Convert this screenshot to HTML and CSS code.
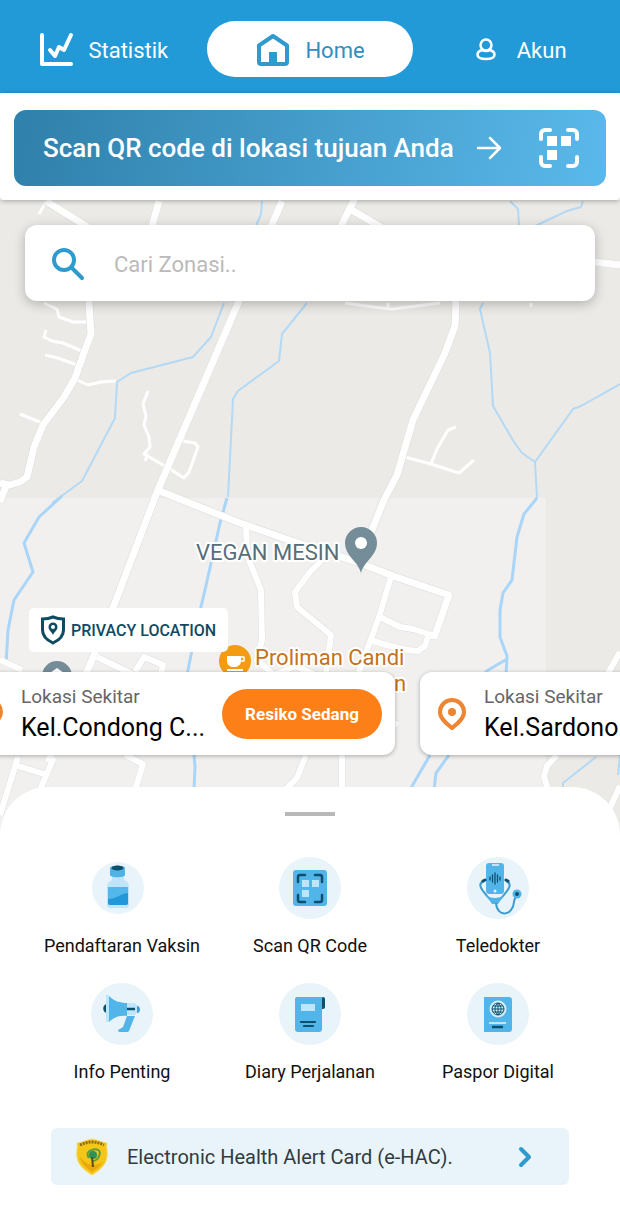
FILE: index.html
```html
<!DOCTYPE html>
<html lang="id">
<head>
    <meta charset="UTF-8">
    <meta name="viewport" content="width=device-width, initial-scale=1">
    <title>Home</title>
    <link rel="stylesheet" href="styles.css">
</head>
<body>
    <nav class="tabs">
        <a class="tab" href="#statistik">
            <svg width="36" height="36" viewBox="0 0 36 36" fill="none" stroke="#fff" stroke-width="4" stroke-linecap="round" stroke-linejoin="round">
                <path d="M4 3v29h29"/>
                <path d="M12 18l5 6 4-9 5 3 7-15"/>
            </svg>
            <span>Statistik</span>
        </a>
        <a class="tab active" href="#home">
            <svg width="36" height="36" viewBox="0 0 36 36" fill="none" stroke="#2f9ace" stroke-width="4" stroke-linejoin="round">
                <path d="M4 13.500L18 4l14 9.500V30a2 2 0 0 1-2 2H6a2 2 0 0 1-2-2z"/>
                <path d="M14 20h8v12h-8z" fill="#2f9ace" stroke="none"/>
            </svg>
            <span>Home</span>
        </a>
        <a class="tab tab-akun" href="#akun">
            <svg width="22" height="26" viewBox="0 0 22 26" fill="none" stroke="#fff" stroke-width="2.500">
                <circle cx="11" cy="8" r="5.500"/>
                <path d="M7 13c-3 1-4.500 2.500-4.500 4.500C2.500 20.500 6 22 11 22s8.500-1.500 8.500-4.500c0-2-1.500-3.500-4.500-4.500-2 1.300-6 1.300-8 0z"/>
            </svg>
            <span>Akun</span>
        </a>
    </nav>

    <div class="scan-bar">
        <button class="scan-button" type="button">
            <span>Scan QR code di lokasi tujuan Anda</span>
            <svg width="26" height="24" viewBox="0 0 26 24" fill="none" stroke="#fff" stroke-width="2.500" stroke-linecap="round" stroke-linejoin="round">
                <path d="M2 12h22M14 2l10 10-10 10"/>
            </svg>
            <svg class="scan-qr" width="40" height="40" viewBox="0 0 40 40" fill="none" stroke="#fff" stroke-width="4" stroke-linecap="round">
                <path d="M2 11V6a4 4 0 0 1 4-4h5M29 2h5a4 4 0 0 1 4 4v5M2 29v5a4 4 0 0 0 4 4h5M29 38h5a4 4 0 0 0 4-4v-5"/>
                <path d="M8 8h10v10H8zM22 8h10v10H22zM8 22h10v10H8z" fill="#fff" stroke="none"/>
            </svg>
        </button>
    </div>

    <main class="map">
        <svg class="map-canvas" viewBox="0 200 620 640" preserveAspectRatio="xMidYMin slice">
            <defs>
                <g id="roads-main">
                    <path d="M46 201L86 226L92 270L89 303L91 334L85 350L75 378L64 397L43 425L34 447L27 477L20 482L6 486L0 502"/>
                    <path d="M159 201L152 226M282 201L239 301L157 492L113 608L92 660L48 762"/>
                    <path d="M350 209L384 229L450 280L456 303L455 326L445 353L413 420L397 475L384 500L370 535"/>
                    <path d="M355 198L340 228M0 483L8 485M157 490L240 523L295 542L360 563L393 576L449 595L435 635"/>
                    <path d="M594 262L620 265"/>
                </g>
                <g id="roads-side">
                    <path d="M246 524L247 555L261 590L262 640L257 660L274 675L295 666L328 680"/>
                    <path d="M330 552L310 572L295 592L297 607L331 635L326 672"/>
                    <path d="M391 577L379 617L367 650L357 678M380 617L400 627L413 629L435 636L428 636L425 646L418 651L408 650L390 646L373 641"/>
                    <path d="M97 657L132 674M135 672L144 657L163 665L160 678M0 660L22 670"/>
                    <path d="M18 757L0 815M15 765L44 774M54 757L40 790M125 755L143 764L135 790"/>
                    <path d="M306 755L297 778L285 790M342 755V790M380 715L398 725"/>
                    <path d="M557 755L547 766L544 776L548 790M620 786L608 812M607 675L620 652"/>
                </g>
                <g id="roads-thin">
                    <path d="M46 202L39 214M44 303L57 309L59 317L73 322L88 322"/>
                    <path d="M46 330L44 337L52 341L63 343L82 351M45 355L58 358L77 365"/>
                    <path d="M75 379L88 385L101 382L116 381M20 414L42 423"/>
                    <path d="M148 391L143 404L146 416L144 425L149 437L150 447L144 454L170 469L184 478L189 472L198 447L195 443L183 441M148 454L145 461"/>
                    <path d="M345 303L374 307L392 309L440 303M388 303V307M531 303V307"/>
                    <path d="M405 457L431 464L459 473L474 460M431 464L437 449L448 430L456 427"/>
                </g>
            </defs>
            <rect y="200" width="620" height="640" fill="#ebeae6"/>
            <rect y="498" width="546" height="342" fill="#f1f0ef"/>
            <g class="river">
                <path d="M262 201L261 214L256 226M224 303L211 337L193 357L131 373L117 382L115 418L82 481L52 503"/>
                <path d="M307 303L282 334L279 361L238 391L233 399L228 497"/>
                <path d="M510 201L518 209L519 226M583 201L581 207L567 211L535 226M483 303L480 309L490 353L493 406L514 442L522 453L535 462L537 498M535 462L573 409L581 406L620 384"/>
                <path d="M596 757L563 783V790M620 755L618 775"/>
            </g>
            <g class="river river-wide">
                <path d="M62 496L39 517L24 543L33 572L14 600L8 630L6 665"/>
                <path d="M227 498L220 523L205 590L199 615L187 675M194 755L195 766L194 790"/>
                <path d="M537 498L524 514L517 537L512 580L503 593L500 610V637L507 656L506 675M507 659L485 672M430 755L411 788M449 755L436 773L434 790"/>
            </g>
            <use href="#roads-thin" stroke="#fff" stroke-width="3"/>
            <use href="#roads-side" stroke="#e0dfdd" stroke-width="7"/>
            <use href="#roads-main" stroke="#dcdbd8" stroke-width="8"/>
            <use href="#roads-side" stroke="#fff" stroke-width="6"/>
            <use href="#roads-main" stroke="#fff" stroke-width="7"/>
            <path d="M361 573c-3-12-16-17-16-30a16 16 0 0 1 32 0c0 13-13 18-16 30z" fill="#748d99"/>
            <circle cx="361" cy="543" r="6" fill="#fff"/>
            <circle cx="57" cy="676" r="15" fill="#748d99"/>
            <path d="M57 668l7 5H50z" fill="#fff"/>
            <circle cx="235" cy="661" r="16" fill="#f39c12"/>
            <path d="M227 656h14v5c0 8-14 8-14 0zM227 669h16v2h-16z" fill="#fff"/>
            <path d="M241 657h3v4h-4" fill="none" stroke="#fff" stroke-width="1.500"/>
            <text class="place" x="196" y="560">VEGAN MESIN</text>
            <text class="place place-food" x="255" y="665">Proliman Candi</text>
            <text class="place place-food" x="394" y="691">n</text>
        </svg>

        <div class="search">
            <label for="zonasi" aria-label="Cari Zonasi">
                <svg width="34" height="34" viewBox="0 0 34 34" fill="none" stroke="#2f9ace" stroke-width="4" stroke-linecap="round">
                    <circle cx="13" cy="13" r="10"/>
                    <path d="M20.500 20.500L31 31"/>
                </svg>
            </label>
            <input type="text" id="zonasi" placeholder="Cari Zonasi..">
        </div>

        <button class="privacy" type="button">
            <svg width="26" height="30" viewBox="0 0 26 30">
                <path d="M2.500 4c4 0 7-.5 10.500-2 3.500 1.500 6.500 2 10.500 2v11c0 6-4 10-10.500 13C6.500 25 2.500 21 2.500 15z" fill="none" stroke="#0f4a63" stroke-width="3"/>
                <path d="M13 20c-1-3-4.500-4.500-4.500-8a4.500 4.500 0 0 1 9 0c0 3.500-3.500 5-4.500 8z" fill="#0f4a63"/>
                <circle cx="13" cy="12" r="2" fill="#fff"/>
            </svg>
            <span>PRIVACY LOCATION</span>
        </button>

        <div class="locations">
            <div class="location">
                <svg class="location-pin" width="28" height="32" viewBox="0 0 28 32">
                    <path d="M14 30C9 26 2 21 2 14a12 12 0 0 1 24 0c0 7-7 12-12 16z" fill="none" stroke="#ee8530" stroke-width="4"/>
                    <circle cx="14" cy="14" r="4" fill="#ee8530"/>
                </svg>
                <div class="location-text">
                    <span class="location-label">Lokasi Sekitar</span>
                    <span class="location-name">Kel.Condong C...</span>
                </div>
                <button class="risk" type="button">Resiko Sedang</button>
            </div>
            <div class="location">
                <svg class="location-pin" width="28" height="32" viewBox="0 0 28 32">
                    <path d="M14 30C9 26 2 21 2 14a12 12 0 0 1 24 0c0 7-7 12-12 16z" fill="none" stroke="#ee8530" stroke-width="4"/>
                    <circle cx="14" cy="14" r="4" fill="#ee8530"/>
                </svg>
                <div class="location-text">
                    <span class="location-label">Lokasi Sekitar</span>
                    <span class="location-name">Kel.Sardono</span>
                </div>
            </div>
        </div>
    </main>

    <section class="sheet">
        <div class="handle"></div>
        <div class="menu">
            <a class="menu-item" href="#vaksin">
                <svg width="62" height="62" viewBox="0 0 62 62">
                    <circle cx="27" cy="31" r="26" fill="#e8f4f9"/>
                    <path d="M21 18h12v5c4 2 5 4 5 7v18a3 3 0 0 1-3 3H19a3 3 0 0 1-3-3V30c0-3 1-5 5-7z" fill="#bfe5fa"/>
                    <path d="M19 11c0-3 15-3 15 0v7c0 3-15 3-15 0z" fill="#4fb3e6"/>
                    <ellipse cx="26.500" cy="11" rx="6" ry="2.500" fill="#0d506d"/>
                    <path d="M17 30h20v16a2 2 0 0 1-2 2H19a2 2 0 0 1-2-2z" fill="#52b7eb"/>
                    <path d="M17 42c8 0 12-5 20-6v10a2 2 0 0 1-2 2H19a2 2 0 0 1-2-2z" fill="#2398d8"/>
                </svg>
                <span>Pendaftaran Vaksin</span>
            </a>
            <a class="menu-item" href="#scan">
                <svg width="62" height="62" viewBox="0 0 62 62">
                    <circle cx="31" cy="31" r="31" fill="#e8f4f9"/>
                    <rect x="14" y="13" width="34" height="36" rx="3" fill="#52b5e9"/>
                    <path d="M19 25v-5a2 2 0 0 1 2-2h5M36 18h5a2 2 0 0 1 2 2v5M19 38v5a2 2 0 0 0 2 2h5M36 45h5a2 2 0 0 0 2-2v-5" fill="none" stroke="#0d506d" stroke-width="2.500" stroke-linecap="round"/>
                    <path d="M23 23h7v7h-7zM33 23h7v7h-7zM23 33h7v7h-7z" fill="#bfe5fa"/>
                </svg>
                <span>Scan QR Code</span>
            </a>
            <a class="menu-item" href="#teledokter">
                <svg width="62" height="62" viewBox="0 0 62 62">
                    <circle cx="31" cy="31" r="31" fill="#e8f4f9"/>
                    <path d="M17 24c-8 3-1 10 3 15 3 4 5 6 8 6s5-2 8-6c4-5 11-12 3-15" fill="none" stroke="#3c9bcc" stroke-width="2"/>
                    <path d="M19 38c5 4 13 4 18 0l-6 9h-6z" fill="#4fb3e6"/>
                    <path d="M29 46c1 15 17 13 18-1 0-3 2-4 2-6" fill="none" stroke="#3c9bcc" stroke-width="2"/>
                    <rect x="19" y="6" width="18" height="31" rx="3" fill="#52b5e9"/>
                    <path d="M25 8h7" stroke="#bfe5fa" stroke-width="2"/>
                    <circle cx="28" cy="34" r="1.500" fill="#e8f4f9"/>
                    <path d="M23 20v3M25.500 18v7M28 16v11M30.500 18v7M33 20v3" stroke="#0d506d" stroke-width="1.300" stroke-linecap="round"/>
                    <path d="M16 24l2-1M39 23l2 1" stroke="#0d506d" stroke-width="3" stroke-linecap="round"/>
                    <circle cx="50" cy="37" r="4.500" fill="#52b5e9"/>
                    <circle cx="50" cy="37" r="2" fill="#0d506d"/>
                </svg>
                <span>Teledokter</span>
            </a>
            <a class="menu-item" href="#info">
                <svg width="62" height="62" viewBox="0 0 62 62">
                    <circle cx="31" cy="31" r="31" fill="#e8f4f9"/>
                    <path d="M16 21c-5 0-5 9 0 9z" fill="#0d506d"/>
                    <path d="M35 20h9l3 3v6l-3 3h-9z" fill="#bfe5fa"/>
                    <path d="M15 12h3v27h-3z" fill="#bfe5fa"/>
                    <path d="M18 13c5 5 11 7 18 7v13c-7-1-13 1-18 6z" fill="#52b5e9"/>
                    <path d="M36 26h8" stroke="#0d506d" stroke-width="2.500"/>
                    <path d="M46 23c4 0 4 7 0 7z" fill="#3f9fce"/>
                    <path d="M36 33h8l-6 15a2 2 0 0 1-2 1h-7c-3 0-2-3 0-3l3-2z" fill="#52b5e9"/>
                </svg>
                <span>Info Penting</span>
            </a>
            <a class="menu-item" href="#diary">
                <svg width="62" height="62" viewBox="0 0 62 62">
                    <circle cx="31" cy="31" r="31" fill="#e8f4f9"/>
                    <path d="M40 14h4a2 2 0 0 1 2 2v8a2 2 0 0 1-2 2h-4z" fill="#0d506d"/>
                    <path d="M18 14h26c-1 1-1 2-1 3v29a3 3 0 0 1-3 3H19a3 3 0 0 1-3-3V16a2 2 0 0 1 2-2z" fill="#52b5e9"/>
                    <path d="M22 21h14v7H22z" fill="#bfe5fa"/>
                    <path d="M22 39h14M25 43h9" stroke="#0d506d" stroke-width="2.200" stroke-linecap="round"/>
                </svg>
                <span>Diary Perjalanan</span>
            </a>
            <a class="menu-item" href="#paspor">
                <svg width="62" height="62" viewBox="0 0 62 62">
                    <circle cx="31" cy="31" r="31" fill="#e8f4f9"/>
                    <path d="M17 14h25a3 3 0 0 1 3 3v29a3 3 0 0 1-3 3H17z" fill="#52b5e9"/>
                    <circle cx="31" cy="26" r="8.500" fill="#d5eefb"/>
                    <path d="M31 20v12M25 26h12M26 23h10M26 29h10M31 20a6 6 0 0 0 0 12 6 6 0 0 0 0-12c-4 3-4 9 0 12 4-3 4-9 0-12" fill="none" stroke="#0d506d" stroke-width="1"/>
                    <path d="M22 40h17" stroke="#bfe5fa" stroke-width="2"/>
                    <path d="M25 44h11" stroke="#0d506d" stroke-width="2.500"/>
                </svg>
                <span>Paspor Digital</span>
            </a>
        </div>

        <a class="ehac" href="#ehac">
            <svg width="34" height="40" viewBox="0 0 34 40">
                <path d="M2 6c5 0 10-4 15-4s10 4 15 4c-1 5 1 9 0 14-1 9-9 14-15 18C11 34 3 29 2 20c-1-5 1-9 0-14z" fill="#f5c518" stroke="#f6dc72"/>
                <path d="M5 8c8-4 16-4 24 0" fill="none" stroke="#8d6b12" stroke-width="3" stroke-dasharray="2 1"/>
                <path d="M5 20c1 7 7 11 12 15 3-2 8-5 11-10-7 4-15 5-23-5z" fill="#e9a90c"/>
                <path d="M17 13c-4 1-6 4-3 8M17 13c4-2 10 0 7 6-1 4-5 5-6 5" fill="none" stroke="#5f9e3f" stroke-width="2"/>
                <circle cx="18" cy="18" r="4" fill="#2c9157"/>
                <path d="M17 20l1 10" stroke="#5f4a16" stroke-width="2"/>
            </svg>
            <span>Electronic Health Alert Card (e-HAC).</span>
            <svg class="ehac-arrow" width="14" height="22" viewBox="0 0 14 22" fill="none" stroke="#2f9ace" stroke-width="4" stroke-linecap="round" stroke-linejoin="round">
                <path d="M3 3l8 8-8 8"/>
            </svg>
        </a>
    </section>
</body>
</html>
```
FILE: styles.css
```css
* {
    box-sizing: border-box;
}
body {
    margin: 0;
    font-family: Roboto, "Liberation Sans", sans-serif;
    background-color: #fff;
    color: #111;
    overflow-x: hidden;
}
a {
    color: inherit;
    text-decoration: none;
}
button {
    font-family: inherit;
    border: none;
    cursor: pointer;
}
svg {
    display: block;
    flex-shrink: 0;
}
.tabs {
    display: grid;
    grid-template-columns: repeat(3, 1fr);
    align-items: center;
    padding: 21px 0 16px;
    background-color: #239ad8;
}
.tab {
    display: flex;
    align-items: center;
    justify-content: center;
    gap: 14px;
    height: 56px;
    padding-top: 2px;
    border-radius: 28px;
    color: #fff;
    font-size: 22px;
}
.tab-akun {
    gap: 20px;
    padding-left: 8px;
}
.tab.active {
    background-color: #fff;
    color: #2f8fbf;
}
.scan-bar {
    position: relative;
    padding: 17px 14px 14px;
    background-color: #fff;
    border-radius: 4px;
    box-shadow: 0 1px 5px rgba(0, 0, 0, 0.3);
    z-index: 1;
}
.scan-button {
    display: flex;
    align-items: center;
    gap: 22px;
    width: 100%;
    height: 76px;
    padding: 0 27px 0 29px;
    border-radius: 12px;
    background: linear-gradient(100deg, #2f80aa, #5ab9eb);
    color: #fff;
    font-size: 26px;
    font-weight: 500;
}
.scan-qr {
    margin-left: auto;
}
.map {
    position: relative;
    padding-top: 25px;
    padding-bottom: 82px;
    overflow: hidden;
}
.map-canvas {
    position: absolute;
    top: 0;
    left: 0;
    width: 100%;
    height: 100%;
    fill: none;
    stroke-linejoin: round;
}
.river {
    stroke: #b3d9f5;
    stroke-width: 2;
}
.river-wide {
    stroke: #a9d6f8;
    stroke-width: 3;
}
.place {
    font-size: 22px;
    fill: #566e7a;
    stroke: #fff;
    stroke-width: 4px;
    paint-order: stroke;
}
.place-food {
    fill: #c5721b;
}
.search {
    position: relative;
    display: flex;
    align-items: center;
    gap: 29px;
    height: 76px;
    margin: 0 25px;
    padding: 2px 26px 0;
    background-color: #fff;
    border-radius: 12px;
    box-shadow: 0 3px 12px rgba(0, 0, 0, 0.25);
}
.search input {
    flex: 1;
    min-width: 0;
    padding: 0;
    border: none;
    outline: none;
    background: none;
    font-family: inherit;
    font-size: 22px;
}
.search input::placeholder {
    color: #bababa;
}
.privacy {
    position: relative;
    display: flex;
    align-items: center;
    gap: 5px;
    height: 44px;
    margin: 307px 0 0 29px;
    padding: 0 12px 0 11px;
    border-radius: 5px;
    background-color: #fff;
    color: #0f4a63;
    font-size: 16px;
    font-weight: 500;
}
.locations {
    position: relative;
    display: flex;
    gap: 25px;
    margin: 20px 0 0 -43px;
}
.location {
    display: flex;
    align-items: center;
    flex: 0 0 438px;
    height: 83px;
    padding: 0 13px 0 18px;
    background-color: #fff;
    border-radius: 12px;
    box-shadow: 0 1px 4px rgba(0, 0, 0, 0.3);
}
.location-text {
    display: flex;
    flex-direction: column;
    gap: 3px;
    padding-top: 2px;
    margin-left: 18px;
}
.location-label {
    color: #666;
    font-size: 19px;
    line-height: 24px;
}
.location-name {
    color: #000;
    font-size: 25px;
    line-height: 32px;
}
.risk {
    width: 160px;
    height: 50px;
    margin-left: auto;
    border-radius: 25px;
    background-color: #fd7f17;
    color: #fff;
    font-size: 17px;
    font-weight: 700;
}
.sheet {
    position: relative;
    margin-top: -50px;
    padding: 25px 28px 42px;
    background-color: #fff;
    border-radius: 48px 48px 0 0;
}
.handle {
    width: 50px;
    height: 4px;
    margin: 0 auto 41px;
    background-color: #b8b8b8;
}
.menu {
    display: grid;
    grid-template-columns: repeat(3, 1fr);
    row-gap: 25px;
}
.menu-item {
    display: flex;
    flex-direction: column;
    align-items: center;
    gap: 15px;
    font-size: 18px;
    line-height: 24px;
}
.ehac {
    display: flex;
    align-items: center;
    gap: 18px;
    height: 57px;
    margin: 44px 23px 0;
    padding: 0 37px 0 24px;
    border-radius: 6px;
    background-color: #e8f4f9;
    color: #333b40;
    font-size: 20px;
}
.ehac-arrow {
    margin-left: auto;
}
```
